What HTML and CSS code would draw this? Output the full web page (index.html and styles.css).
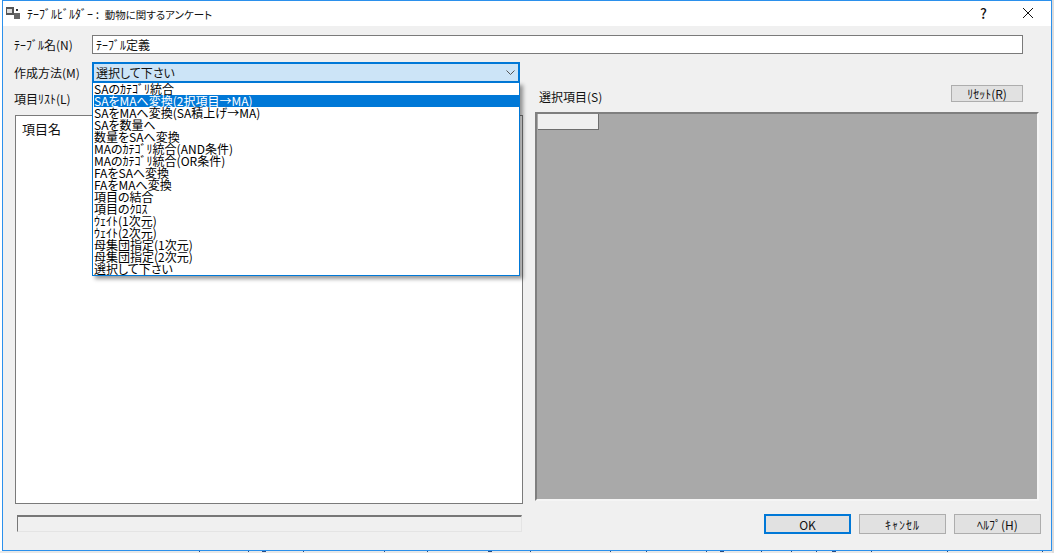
FILE: index.html
```html
<!DOCTYPE html>
<html lang="ja">
<head>
<meta charset="utf-8">
<title>テーブルビルダー</title>
<link rel="stylesheet" href="styles.css">
</head>
<body>
<div class="dialog">
  <div class="titlebar">
    <svg class="appicon" width="14" height="14" viewBox="0 0 14 14">
      <rect x="0" y="1" width="8" height="8" fill="#555"/>
      <rect x="1" y="3" width="5" height="4" fill="#ddd"/>
      <rect x="10" y="3" width="2" height="2" fill="#333"/>
      <rect x="8" y="7" width="6" height="6" fill="#666"/>
    </svg>
    <span class="title">ﾃｰﾌﾞﾙﾋﾞﾙﾀﾞｰ : <span class="title-name">動物に関するアンケート</span></span>
    <span class="help-q">?</span>
    <svg class="close" width="10" height="10" viewBox="0 0 10 10"><path d="M0 0 10 10M10 0 0 10" stroke="#111" stroke-width="1" fill="none"/></svg>
  </div>
  <div class="body">
    <div class="row row-name">
      <span class="label">ﾃｰﾌﾞﾙ名(N)</span>
      <div class="input">ﾃｰﾌﾞﾙ定義</div>
    </div>
    <div class="row row-method">
      <span class="label">作成方法(M)</span>
      <div class="select">
        <span>選択して下さい</span>
        <svg width="9" height="5" viewBox="0 0 9 5"><path d="M0.5 0.5 4.5 4.5 8.5 0.5" stroke="#555" stroke-width="1" fill="none"/></svg>
        <ul class="dropdown">
          <li>SAのｶﾃｺﾞﾘ統合</li>
          <li class="sel">SAをMAへ変換(2択項目→MA)</li>
          <li>SAをMAへ変換(SA積上げ→MA)</li>
          <li>SAを数量へ</li>
          <li>数量をSAへ変換</li>
          <li>MAのｶﾃｺﾞﾘ統合(AND条件)</li>
          <li>MAのｶﾃｺﾞﾘ統合(OR条件)</li>
          <li>FAをSAへ変換</li>
          <li>FAをMAへ変換</li>
          <li>項目の結合</li>
          <li>項目のｸﾛｽ</li>
          <li>ｳｪｲﾄ(1次元)</li>
          <li>ｳｪｲﾄ(2次元)</li>
          <li>母集団指定(1次元)</li>
          <li>母集団指定(2次元)</li>
          <li>選択して下さい</li>
        </ul>
      </div>
    </div>
    <div class="columns">
      <div class="left">
        <div class="label list-label">項目ﾘｽﾄ(L)</div>
        <div class="listbox"><span>項目名</span></div>
        <div class="status"></div>
      </div>
      <div class="right">
        <div class="right-head">
          <span class="label">選択項目(S)</span>
          <div class="btn btn-reset">ﾘｾｯﾄ(R)</div>
        </div>
        <div class="grid-area"><div class="corner"></div></div>
        <div class="buttons">
          <div class="btn btn-main primary">OK</div>
          <div class="btn btn-main btn-cancel">ｷｬﾝｾﾙ</div>
          <div class="btn btn-main">ﾍﾙﾌﾟ(H)</div>
        </div>
      </div>
    </div>
  </div>
</div>
</body>
</html>
```
FILE: styles.css
```css
* { box-sizing: border-box; }
html, body { margin: 0; padding: 0; }
body {
  width: 1054px;
  height: 553px;
  overflow: hidden;
  font-family: "Noto Sans CJK JP", "Noto Sans", sans-serif;
  font-size: 12px;
  color: #111;
  --tick: linear-gradient(#2a4a80, #2a4a80);
  background:
    var(--tick) 199px 551px / 1px 1px no-repeat,
    var(--tick) 248px 551px / 1px 1px no-repeat,
    var(--tick) 262px 551px / 4px 1px no-repeat,
    var(--tick) 303px 551px / 1px 1px no-repeat,
    var(--tick) 384px 551px / 1px 1px no-repeat,
    var(--tick) 427px 551px / 1px 1px no-repeat,
    var(--tick) 488px 551px / 4px 1px no-repeat,
    var(--tick) 530px 551px / 1px 1px no-repeat,
    var(--tick) 610px 551px / 1px 1px no-repeat,
    var(--tick) 646px 551px / 1px 1px no-repeat,
    var(--tick) 706px 551px / 1px 1px no-repeat,
    var(--tick) 720px 551px / 4px 1px no-repeat,
    var(--tick) 761px 551px / 1px 1px no-repeat,
    var(--tick) 791px 551px / 1px 1px no-repeat,
    var(--tick) 816px 551px / 1px 1px no-repeat,
    var(--tick) 832px 551px / 4px 1px no-repeat,
    var(--tick) 871px 551px / 1px 1px no-repeat,
    var(--tick) 947px 551px / 1px 1px no-repeat,
    var(--tick) 1042px 551px / 1px 1px no-repeat,
    linear-gradient(#dcdcdc, #dcdcdc) 1052px 0 / 2px 553px no-repeat,
    linear-gradient(#e8e8e8, #e8e8e8) 0 551px / 1054px 2px no-repeat,
    #fff;
}
.dialog {
  width: 1050px;
  height: 551px;
  margin-left: 2px;
  border: 1px solid #2b90ec;
  background: #f0f0f0;
  display: flex;
  flex-direction: column;
}
.titlebar {
  height: 25px;
  background: #fff;
  display: flex;
  align-items: center;
  padding: 0 0 1px 3px;
  flex: none;
}
.title { margin-left: 7px; font-size: 12px; flex: 1; }
.title-name { font-size: 10.5px; margin-left: 3px; font-feature-settings: "palt"; }
.help-q { font-size: 14px; font-weight: 500; margin-right: 36px; }
.close { margin-right: 18px; }
.body { flex: 1; padding: 9px 0 0 11px; display: flex; flex-direction: column; }
.row { display: flex; align-items: center; }
.label { line-height: 14px; white-space: nowrap; }
.row .label { width: 78px; flex: none; }
.input {
  width: 931px;
  height: 19px;
  border: 1px solid #7a7a7a;
  background: #fff;
  padding-left: 3px;
  line-height: 17px;
}
.row-method { margin-top: 8px; }
.select {
  position: relative;
  width: 428px;
  height: 21px;
  border: 2px solid #0078d7;
  background: #cce4f7;
  padding: 0 3px 0 2px;
  display: flex;
  align-items: center;
  justify-content: space-between;
  z-index: 2;
  font-feature-settings: "palt";
}
.dropdown {
  position: absolute;
  left: -2px;
  top: 18px;
  width: 428px;
  margin: 0;
  padding: 0 0 0 1px;
  list-style: none;
  background: #fff;
  border: 1px solid #0078d7;
  box-shadow: 3px 3px 4px rgba(0, 0, 0, .4);
}
.dropdown li { height: 12px; line-height: 12px; white-space: nowrap; color: #000; }
.dropdown .sel { background: #0078d7; color: #fff; }
.columns { flex: 1; display: flex; }
.left { width: 509px; flex: none; padding-left: 1px; }
.list-label { margin: 9px 0 0 -1px; height: 14px; }
.listbox {
  width: 508px;
  height: 389px;
  margin-top: 9px;
  border: 1px solid #7a7a7a;
  background: #fff;
  padding: 5px 0 0 6px;
  font-size: 13px;
  line-height: 16px;
}
.status {
  width: 505px;
  height: 17px;
  margin: 11px 0 0 2px;
  border: 1px solid;
  border-color: #777 #e4e4e4 #e4e4e4 #777;
  border-top-width: 2px;
  background: #f0f0f0;
}
.right { flex: 1; }
.right-head { height: 29px; display: flex; justify-content: space-between; padding: 2px 28px 0 16px; }
.right-head .label { margin-top: 5px; }
.btn {
  display: flex;
  align-items: center;
  justify-content: center;
  background: #e1e1e1;
  border: 1px solid #adadad;
}
.btn-reset { width: 72px; height: 17px; }
.grid-area {
  width: 504px;
  height: 389px;
  margin-left: 12px;
  background: #a9a9a9;
  border: 2px solid;
  border-color: #7f7f7f #f5f5f5 #f5f5f5 #7f7f7f;
}
.corner {
  width: 61px;
  height: 16px;
  margin-left: 1px;
  background: #f0f0f0;
  border-right: 1px solid #6e6e6e;
  border-bottom: 1px solid #6e6e6e;
}
.buttons { display: flex; gap: 8px; margin: 13px 0 0 241px; }
.btn-main { width: 87px; height: 20px; }
.btn-cancel { letter-spacing: 1px; }
.primary { border: 2px solid #0078d7; }
```
